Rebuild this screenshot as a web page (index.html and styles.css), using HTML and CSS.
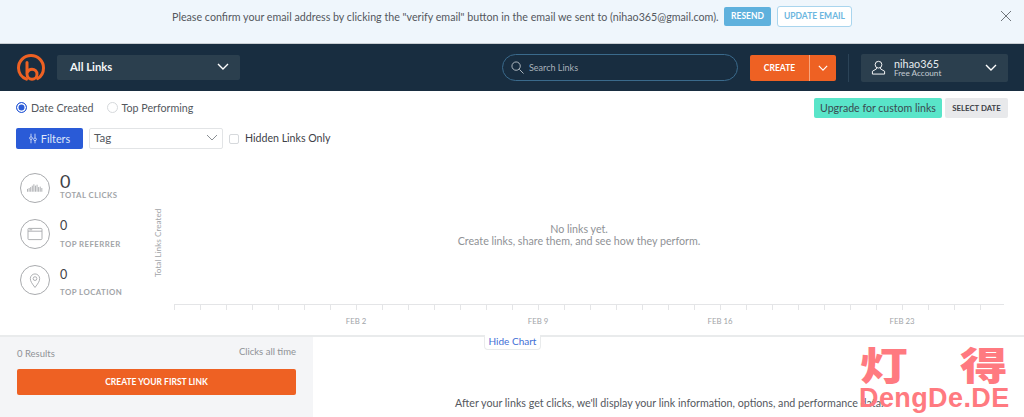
FILE: index.html
```html
<!DOCTYPE html>
<html lang="en">
<head>
<meta charset="utf-8">
<title>Bitly</title>
<link rel="stylesheet" href="styles.css">
</head>
<body>
<div class="banner">
  <div></div>
  <div class="banner-main">
    <span class="banner-text">Please confirm your email address by clicking the "verify email" button in the email we sent to (nihao365@gmail.com).</span>
    <button class="btn-resend">RESEND</button>
    <button class="btn-update">UPDATE EMAIL</button>
  </div>
  <svg class="close" viewBox="0 0 12 12"><path d="M1 1l10 10M11 1L1 11"/></svg>
</div>
<header class="topbar">
  <svg class="logo" viewBox="0 0 28 28"><path class="logo-ring" d="M9.5 25.2C4.800 23.500 1.500 19.200 1.500 14 1.500 7.100 7.100 1.500 14 1.500S26.500 7.100 26.500 14c0 4.500-2.300 8.400-5.800 10.600"/><path class="logo-b" d="M10 8.500V20c0 3 2.300 5.200 5 5.200s5-2.200 5-5-2.300-5-5-5c-2 0-3.800 1.200-4.500 2.900"/></svg>
  <div class="links-select"><span>All Links</span><svg class="chev" viewBox="0 0 12 7"><path d="M1 1l5 5 5-5"/></svg></div>
  <div class="search">
    <svg class="search-icon" viewBox="0 0 14 14"><circle cx="5.500" cy="5.500" r="4.500"/><path d="M9 9l4.500 4.500"/></svg>
    <span>Search Links</span>
  </div>
  <div class="create"><span class="create-label">CREATE</span><span class="create-caret"><svg class="chev small" viewBox="0 0 12 7"><path d="M1 1l5 5 5-5"/></svg></span></div>
  <div class="divider"></div>
  <div class="user">
    <svg class="user-icon" viewBox="0 0 16 16"><circle cx="8" cy="5" r="3.600"/><path d="M5.800 8.200v1.300L1.500 12v3h13v-3l-4.300-2.500V8.200"/></svg>
    <div class="user-text"><div class="user-name">nihao365</div><div class="user-plan">Free Account</div></div>
    <svg class="chev" viewBox="0 0 12 7"><path d="M1 1l5 5 5-5"/></svg>
  </div>
</header>
<section class="toolbar">
  <div class="row-top">
    <label class="radio"><span class="dot on"></span>Date Created</label>
    <label class="radio"><span class="dot"></span>Top Performing</label>
    <button class="btn-upgrade">Upgrade for custom links</button>
    <button class="btn-date">SELECT DATE</button>
  </div>
  <div class="row-filters">
    <button class="btn-filters">
      <svg class="filter-icon" viewBox="0 0 10 12"><path d="M2.500 0v3.500M2.500 7.500V12M7.500 0v5M7.500 9v3"/><circle cx="2.500" cy="5.500" r="1.700"/><circle cx="7.500" cy="7" r="1.700"/></svg>
      Filters
    </button>
    <div class="tag-select"><span>Tag</span><svg class="chev grey" viewBox="0 0 12 7"><path d="M1 1l5 5 5-5"/></svg></div>
    <span class="check"></span>
    <span class="check-label">Hidden Links Only</span>
  </div>
</section>
<section class="analytics">
  <div class="stats">
    <div class="stat first">
      <span class="stat-icon">
        <svg viewBox="0 0 30 30"><path d="M7 16v3M8.700 15v4M10.400 14v5M12.100 12.500v6.500M13.800 11v8M15.500 12.500v6.500M17.200 11.500v7.500M18.900 14v5M20.600 13.500v5.500M22.300 15v4"/></svg>
      </span>
      <div><div class="stat-value big">0</div><div class="stat-label">TOTAL CLICKS</div></div>
    </div>
    <div class="stat">
      <span class="stat-icon">
        <svg viewBox="0 0 30 30"><rect x="7.500" y="9" width="15" height="12" rx="1"/><path d="M7.500 12h15M9 10.500h3"/></svg>
      </span>
      <div><div class="stat-value">0</div><div class="stat-label">TOP REFERRER</div></div>
    </div>
    <div class="stat">
      <span class="stat-icon">
        <svg viewBox="0 0 30 30"><path d="M15 23c-3-4-5-6.500-5-9.500a5 5 0 0 1 10 0c0 3-2 5.500-5 9.500z"/><circle cx="15" cy="13.500" r="2"/></svg>
      </span>
      <div><div class="stat-value">0</div><div class="stat-label">TOP LOCATION</div></div>
    </div>
  </div>
  <div class="y-label">Total Links Created</div>
  <div class="chart">
    <div class="chart-empty">
      <p>No links yet.</p>
      <p>Create links, share them, and see how they perform.</p>
    </div>
    <div class="ticks">
      <i></i><i></i><i></i><i></i><i></i><i></i><i></i><i></i><i></i><i></i><i></i><i></i><i></i><i></i><i></i><i></i><i></i><i></i><i></i><i></i><i></i><i></i><i></i><i></i><i></i><i></i><i></i><i></i><i></i><i></i><i></i><i></i>
    </div>
    <div class="dates">
      <span>FEB 2</span><span>FEB 9</span><span>FEB 16</span><span>FEB 23</span>
    </div>
  </div>
  <button class="hide-chart">Hide Chart</button>
</section>
<section class="lower">
  <aside class="results">
    <div class="results-head"><span>0 Results</span><span class="clicks-all">Clicks all time</span></div>
    <button class="btn-first">CREATE YOUR FIRST LINK</button>
  </aside>
  <div class="detail">After your links get clicks, we'll display your link information, options, and performance data.</div>
</section>
<div class="watermark">
  <div class="wm-cn"><span>灯</span><span>得</span></div>
  <div class="wm-en">DengDe.DE</div>
</div>
</body>
</html>
```
FILE: styles.css
```css
* { box-sizing: border-box; }
html, body { margin: 0; padding: 0; }
body {
  width: 1024px;
  height: 417px;
  overflow: hidden;
  position: relative;
  background: #fff;
  font-family: Lato, "Open Sans", sans-serif;
  color: #4a4d52;
}
button { font-family: inherit; border: 0; padding: 0; }
svg { display: block; fill: none; }
p { margin: 0; }

.banner {
  height: 44px;
  background: #eff6fc;
  border-bottom: 1px solid #c9ced3;
  display: grid;
  grid-template-columns: 1fr auto 1fr;
  align-items: center;
  padding-bottom: 11px;
}
.banner-main { display: flex; align-items: center; }
.banner-text { font-size: 10.700px; color: #54585e; width: 552px; white-space: nowrap; }
.btn-resend {
  width: 47px; height: 19px;
  background: #5fb1dd; color: #fff;
  font-size: 8.500px; font-weight: 700;
  border-radius: 2px;
}
.btn-update {
  width: 75px; height: 21px; margin-left: 6px;
  background: #fff; color: #6bb6e0;
  border: 1px solid #a9d5ee; border-radius: 3px;
  font-size: 8.500px; font-weight: 700;
}
.close { width: 12px; height: 12px; justify-self: end; margin-right: 12px; }
.close path { stroke: #6f757b; stroke-width: 1; }

.topbar {
  height: 47px;
  background: #182d40;
  display: flex;
  align-items: center;
  padding: 0 16px 0 17px;
}
.logo { width: 28px; height: 28px; }
.logo-ring, .logo-b { stroke: #ee6123; stroke-width: 3; stroke-linecap: round; }
.links-select {
  width: 183px; height: 25px; margin-left: 12px;
  background: #2b3f4e; border-radius: 2px;
  display: flex; align-items: center; justify-content: space-between;
  padding: 0 11px 2px 13px;
  color: #f4f6f8; font-size: 11.300px; font-weight: 700;
}
.chev { width: 12px; height: 7px; }
.chev path { stroke: #fff; stroke-width: 1.400; }
.chev.small { width: 10px; height: 6px; }
.chev.grey path { stroke: #8a8f94; stroke-width: 1; }
.search {
  width: 236px; height: 27px; margin-left: auto;
  border: 1px solid #3a6a8c; border-radius: 14px;
  display: flex; align-items: center; padding-left: 8px;
  color: #a8b2ba; font-size: 9px;
}
.search-icon { width: 13px; height: 13px; margin-right: 5px; }
.search-icon circle, .search-icon path { stroke: #b9c1c8; stroke-width: 1; }
.create {
  width: 86px; height: 26px; margin-left: 12px;
  background: #ee6123; border-radius: 2px;
  display: flex; color: #fff;
}
.create-label {
  width: 60px; border-right: 1px solid #f8a57e;
  display: flex; align-items: center; justify-content: center;
  font-size: 8.500px; font-weight: 700;
}
.create-caret { flex: 1; display: flex; align-items: center; justify-content: center; }
.divider { width: 1px; height: 28px; margin-left: 12px; background: #2b4357; }
.user {
  width: 147px; height: 28px; margin-left: 12px;
  background: #2b3f4e; border-radius: 2px;
  display: flex; align-items: center;
  padding: 0 11px 0 10px; color: #e8ecef;
}
.user-icon { width: 15px; height: 15px; margin-right: 8px; }
.user-icon circle, .user-icon path { stroke: #fff; stroke-width: 1; }
.user-text { flex: 1; }
.user-name { font-size: 10.800px; line-height: 11px; }
.user-plan { font-size: 8.200px; line-height: 9px; color: #c4ccd2; }

.toolbar { padding: 7px 16px 0; height: 74px; }
.row-top { display: flex; align-items: center; height: 20px; }
.radio { display: flex; align-items: center; font-size: 10.700px; color: #54585e; margin-right: 13px; padding-bottom: 1px; }
.dot {
  width: 11px; height: 11px; margin-right: 4px;
  border-radius: 50%; border: 1px solid #d6d9dc; background: #fff;
}
.dot.on { background: #2a5bd7; border-color: #2a5bd7; box-shadow: inset 0 0 0 1.500px #fff; }
.btn-upgrade {
  margin-left: auto; width: 128px; height: 20px;
  background: #59e5c9; color: #3a4a50; border-radius: 2px; font-size: 10.600px;
}
.btn-date {
  margin-left: 3px; width: 63px; height: 20px;
  background: #e8e9eb; color: #3e4147; border-radius: 2px;
  font-size: 7.800px; font-weight: 700;
}
.row-filters { display: flex; align-items: center; margin-top: 10px; height: 21px; }
.btn-filters {
  width: 67px; height: 21px;
  background: #2a5bd7; color: #dfe7fa; border-radius: 2px;
  display: flex; align-items: center; justify-content: center;
  font-size: 10.800px; padding-bottom: 1px;
}
.filter-icon { width: 8px; height: 11px; margin-right: 4px; }
.filter-icon path, .filter-icon circle { stroke: #e6ecfb; stroke-width: 1; }
.tag-select {
  width: 134px; height: 21px; margin-left: 6px;
  border: 1px solid #e2e4e6; border-radius: 2px;
  display: flex; align-items: center; justify-content: space-between;
  padding: 0 4px 2px; font-size: 11.500px; color: #54585e;
}
.check {
  width: 10px; height: 10px; margin-left: 6px;
  border: 1px solid #d6d9dc; border-radius: 2px;
}
.check-label { margin-left: 6px; font-size: 10.600px; color: #3e4147; padding-bottom: 1px; }

.analytics {
  position: relative;
  height: 172px;
  border-bottom: 2px solid #e9ebec;
  display: flex;
}
.stats { width: 153px; padding-left: 20px; padding-top: 7px; }
.stat { display: flex; align-items: center; height: 31px; margin-bottom: 15px; }
.stat-icon {
  width: 30px; height: 30px; margin-right: 10px; flex: none;
  border: 1px solid #a9abae; border-radius: 50%;
}
.stat-icon svg { width: 28px; height: 28px; }
.stat-icon path, .stat-icon rect, .stat-icon circle { stroke: #a9abae; stroke-width: 1; }
.stat-value { font-size: 12.500px; line-height: 15px; color: #3e4147; margin-bottom: 6px; }
.stat-value.big { font-size: 18px; line-height: 17px; margin-bottom: 0; margin-top: -3px; }
.stat-label { font-size: 7.800px; line-height: 10px; font-weight: 700; letter-spacing: .45px; color: #a1a4a8; }
.stat:last-child .stat-value { margin-top: 5px; margin-bottom: 5px; }
.y-label {
  writing-mode: vertical-rl; transform: rotate(180deg);
  width: 11px; height: 100px; margin-top: 28px;
  font-size: 8.200px; line-height: 11px; color: #a1a4a8;
  text-align: center;
}
.chart { width: 830px; margin-left: 10px; padding-top: 58px; }
.chart-empty { height: 81px; text-align: center; font-size: 10.700px; line-height: 12px; color: #8f9296; width: 810px; }
.ticks {
  display: flex; height: 6px;
  border-top: 1px solid #e4e5e7;
}
.ticks i { width: 26px; flex: none; border-left: 1px solid #e4e5e7; }
.dates { display: flex; margin-top: 6px; padding-left: 182px; font-size: 7.800px; line-height: 10px; color: #a1a4a8; }
.dates span { width: 182px; flex: none; margin-left: -91px; margin-right: 91px; text-align: center; }
.hide-chart {
  position: absolute; left: 484px; bottom: -15px;
  width: 57px; height: 15px; padding-bottom: 2px;
  background: #fff; color: #3f6fd6;
  border: 1px solid #e9ebec; border-top: 0;
  border-radius: 0 0 4px 4px;
  font-size: 10px; z-index: 1;
}

.lower { display: flex; height: 80px; }
.results { width: 313px; background: #f4f5f7; padding: 11px 17px 0; }
.results-head { display: flex; justify-content: space-between; font-size: 9.500px; color: #8f9296; height: 20px; }
.clicks-all { margin-top: -2px; }
.btn-first {
  width: 279px; height: 26px; margin-top: 1px;
  background: #ee6123; color: #fff; border-radius: 2px;
  font-size: 8.500px; font-weight: 700;
}
.detail { flex: 1; padding: 59px 0 0 142px; font-size: 10.700px; color: #54585e; white-space: nowrap; }

.watermark {
  position: absolute; left: 860px; top: 343px; width: 148px; z-index: 2;
  color: #ff7a80; pointer-events: none;
}
.wm-cn {
  display: flex; justify-content: space-between;
  font-family: "Noto Sans CJK SC", sans-serif; font-weight: 900;
  font-size: 39px; line-height: 40px; height: 42px;
}
.wm-cn span { display: block; transform: scaleX(1.22); transform-origin: 0 50%; width: 48px; }
.wm-en { font-family: "Liberation Sans", sans-serif; font-weight: 700; font-size: 27px; line-height: 26px; letter-spacing: .4px; white-space: nowrap; margin-left: -1px; }
```
